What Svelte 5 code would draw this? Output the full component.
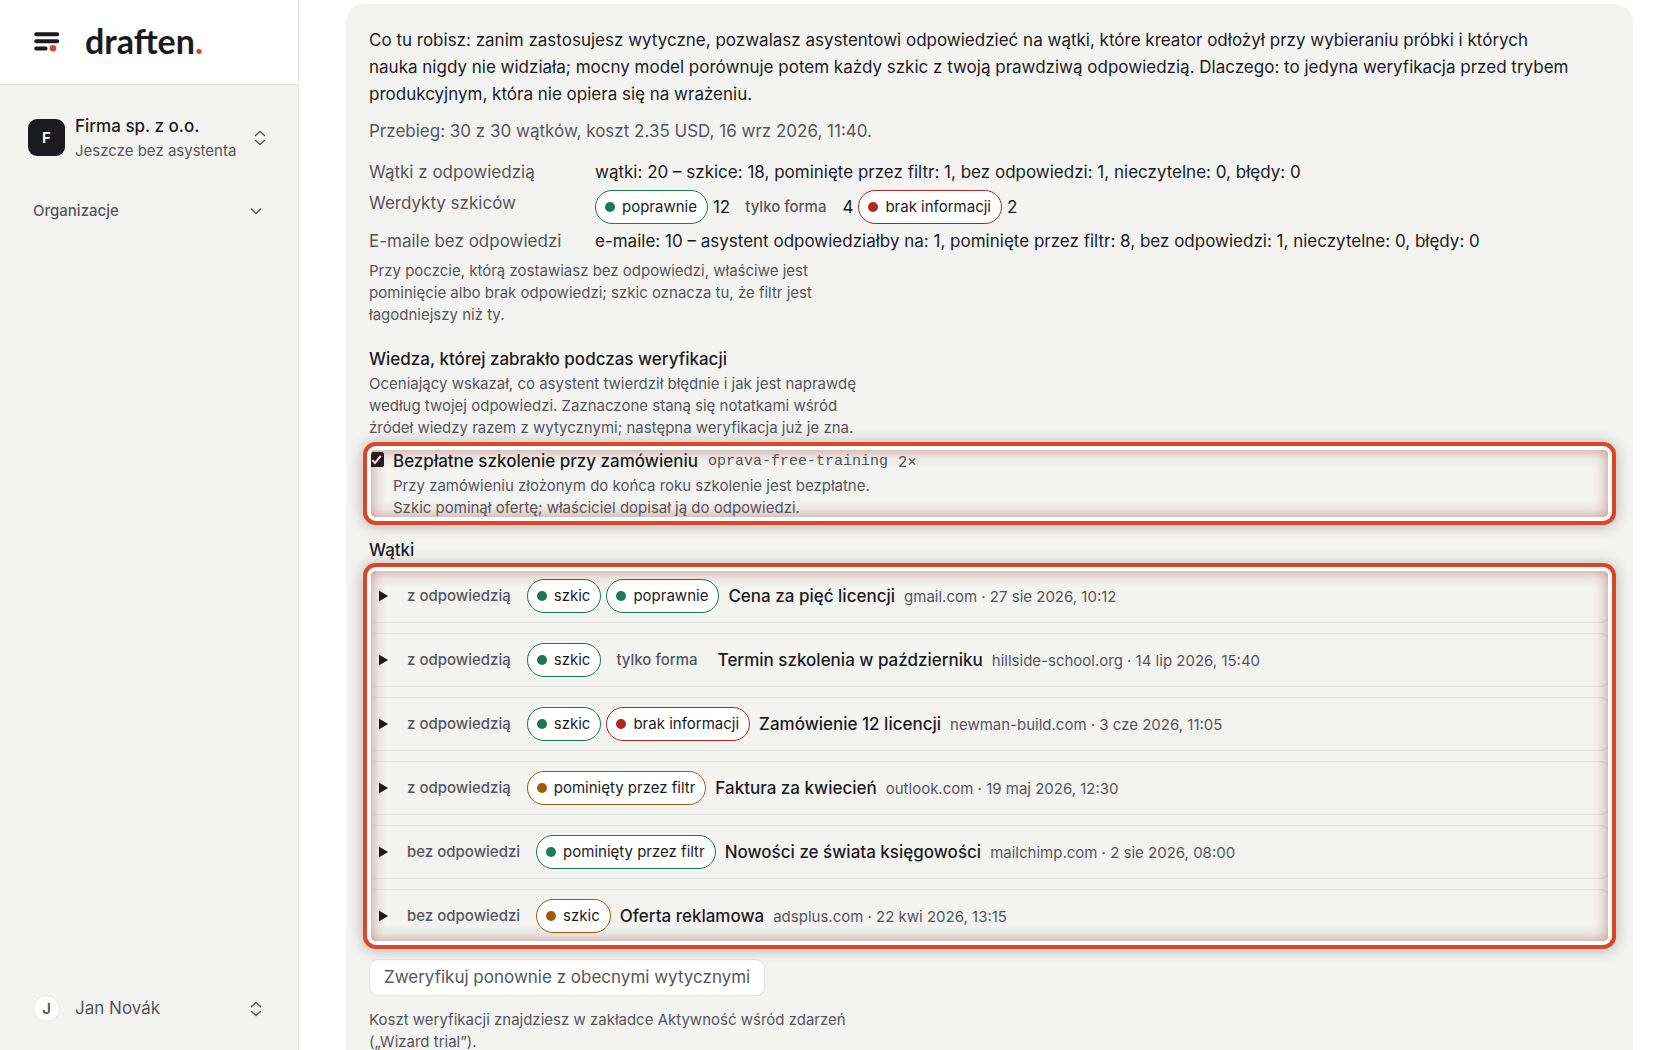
<script>
    const results = [
        { count: 12, text: "poprawnie", tone: "ok" },
        { count: 4, text: "tylko forma", tone: "plain" },
        { count: 2, text: "brak informacji", tone: "bad" }
    ];

    const threads = [
        {
            kind: "z odpowiedzią",
            badges: [{ text: "szkic", tone: "ok" }, { text: "poprawnie", tone: "ok" }],
            title: "Cena za pięć licencji",
            meta: "gmail.com · 27 sie 2026, 10:12"
        },
        {
            kind: "z odpowiedzią",
            badges: [{ text: "szkic", tone: "ok" }, { text: "tylko forma", tone: "plain" }],
            title: "Termin szkolenia w październiku",
            meta: "hillside-school.org · 14 lip 2026, 15:40"
        },
        {
            kind: "z odpowiedzią",
            badges: [{ text: "szkic", tone: "ok" }, { text: "brak informacji", tone: "bad" }],
            title: "Zamówienie 12 licencji",
            meta: "newman-build.com · 3 cze 2026, 11:05"
        },
        {
            kind: "z odpowiedzią",
            badges: [{ text: "pominięty przez filtr", tone: "warn" }],
            title: "Faktura za kwiecień",
            meta: "outlook.com · 19 maj 2026, 12:30"
        },
        {
            kind: "bez odpowiedzi",
            badges: [{ text: "pominięty przez filtr", tone: "ok" }],
            title: "Nowości ze świata księgowości",
            meta: "mailchimp.com · 2 sie 2026, 08:00"
        },
        {
            kind: "bez odpowiedzi",
            badges: [{ text: "szkic", tone: "warn" }],
            title: "Oferta reklamowa",
            meta: "adsplus.com · 22 kwi 2026, 13:15"
        }
    ];

    let useNote = $state(true);
</script>

{#snippet badge(text, tone)}
    <span class="badge {tone}">
        {#if tone !== "plain"}<i class="dot"></i>{/if}{text}
    </span>
{/snippet}

{#snippet upDown()}
    <svg class="icon" width="18" height="18" viewBox="0 0 18 18" aria-hidden="true">
        <path d="M4.5 6.5 9 2.5l4.5 4M4.5 11.5l4.5 4 4.5-4" />
    </svg>
{/snippet}

<div class="app">
    <aside>
        <a class="brand" href="/" aria-label="draften.">
            <svg width="26" height="20" viewBox="0 0 26 20" aria-hidden="true">
                <g stroke="#1b1b1f" stroke-width="4" stroke-linecap="round">
                    <path d="M2.2 2.2h21M2.2 9.2h21M2.2 16.4h9.4" />
                </g>
                <circle cx="19" cy="16.2" r="3.3" fill="#d9472b" />
            </svg>
            <span class="wordmark">draften<span class="stop">.</span></span>
        </a>
        <nav>
            <button class="org">
                <span class="logo">F</span>
                <span class="names">
                    <span class="name">Firma sp. z o.o.</span>
                    <span class="sub">Jeszcze bez asystenta</span>
                </span>
                {@render upDown()}
            </button>
            <button class="group">
                <span>Organizacje</span>
                <svg class="icon" width="18" height="18" viewBox="0 0 18 18" aria-hidden="true">
                    <path d="m4.5 7 4.5 4.5L13.5 7" />
                </svg>
            </button>
        </nav>
        <button class="user">
            <span class="initial">J</span>
            <span class="userName">Jan Novák</span>
            {@render upDown()}
        </button>
    </aside>

    <main>
        <section class="card">
            <p class="intro">Co tu robisz: zanim zastosujesz wytyczne, pozwalasz asystentowi odpowiedzieć na wątki, które kreator odłożył przy wybieraniu próbki i których nauka nigdy nie widziała; mocny model porównuje potem każdy szkic z twoją prawdziwą odpowiedzią. Dlaczego: to jedyna weryfikacja przed trybem produkcyjnym, która nie opiera się na wrażeniu.</p>
            <p class="run">Przebieg: 30 z 30 wątków, koszt 2.35 USD, 16 wrz 2026, 11:40.</p>

            <dl>
                <dt>Wątki z odpowiedzią</dt>
                <dd>wątki: 20 – szkice: 18, pominięte przez filtr: 1, bez odpowiedzi: 1, nieczytelne: 0, błędy: 0</dd>
                <dt>Werdykty szkiców</dt>
                <dd class="verdicts">
                    {#each results as r}
                        {@render badge(r.text, r.tone)}
                        <span>{r.count}</span>
                    {/each}
                </dd>
                <dt>E-maile bez odpowiedzi</dt>
                <dd>e-maile: 10 – asystent odpowiedziałby na: 1, pominięte przez filtr: 8, bez odpowiedzi: 1, nieczytelne: 0, błędy: 0</dd>
            </dl>
            <p class="hint">Przy poczcie, którą zostawiasz bez odpowiedzi, właściwe jest pominięcie albo brak odpowiedzi; szkic oznacza tu, że filtr jest łagodniejszy niż ty.</p>

            <h2>Wiedza, której zabrakło podczas weryfikacji</h2>
            <p class="hint">Oceniający wskazał, co asystent twierdził błędnie i jak jest naprawdę według twojej odpowiedzi. Zaznaczone staną się notatkami wśród źródeł wiedzy razem z wytycznymi; następna weryfikacja już je zna.</p>

            <div class="note marked">
                <input id="note" type="checkbox" bind:checked={useNote} />
                <div>
                    <div class="noteHead">
                        <label for="note">Bezpłatne szkolenie przy zamówieniu</label>
                        <code>oprava-free-training</code>
                        <span>2×</span>
                    </div>
                    <p>Przy zamówieniu złożonym do końca roku szkolenie jest bezpłatne.</p>
                    <p>Szkic pominął ofertę; właściciel dopisał ją do odpowiedzi.</p>
                </div>
            </div>

            <h2>Wątki</h2>
            <div class="threads marked">
                {#each threads as t}
                    <details>
                        <summary>
                            <svg class="marker" width="9" height="12" viewBox="0 0 9 12" aria-hidden="true">
                                <path d="M0 .5v11L9 6z" />
                            </svg>
                            <span class="badges">
                                {@render badge(t.kind, "plain")}
                                {#each t.badges as b}
                                    {@render badge(b.text, b.tone)}
                                {/each}
                            </span>
                            <span class="title">{t.title}</span>
                            <span class="meta">{t.meta}</span>
                        </summary>
                    </details>
                {/each}
            </div>

            <button class="again">Zweryfikuj ponownie z obecnymi wytycznymi</button>
            <p class="hint">Koszt weryfikacji znajdziesz w zakładce Aktywność wśród zdarzeń („Wizard trial”).</p>
        </section>
    </main>
</div>

<style>
    :global(body) {
        background: #fff;
    }
    .app {
        display: flex;
        height: 100vh;
        overflow: hidden;
        font-family: Inter, "Liberation Sans", sans-serif;
        font-size: 17px;
        line-height: 27px;
        color: #1b1b1f;
    }
    .app * {
        box-sizing: border-box;
    }
    p, h2, dl, dd {
        margin: 0;
    }
    button {
        font: inherit;
        color: inherit;
        border: 0;
        padding: 0;
        background: none;
        text-align: left;
    }
    .icon {
        flex: none;
        fill: none;
        stroke: #55565c;
        stroke-width: 1.5;
        stroke-linecap: round;
        stroke-linejoin: round;
    }

    aside {
        display: flex;
        flex-direction: column;
        flex: 0 0 299px;
        background: #f3f3f1;
        border-right: 1px solid #e6e6e3;
    }
    .brand {
        display: flex;
        align-items: center;
        gap: 25px;
        height: 85px;
        padding: 0 34px;
        background: #fff;
        border-bottom: 1px solid #e2e2df;
        color: #1b1b1f;
        text-decoration: none;
    }
    .wordmark {
        padding-bottom: 2px;
        font-family: Lato, sans-serif;
        font-size: 34px;
        font-weight: 700;
        line-height: 40px;
    }
    .stop {
        color: #d9472b;
    }
    nav {
        display: flex;
        flex-direction: column;
        flex: 1;
        gap: 38px;
        padding: 28px;
    }
    .org {
        display: flex;
        align-items: center;
        gap: 10px;
        padding-right: 1px;
    }
    .logo {
        width: 37px;
        height: 37px;
        border-radius: 9px;
        background: #1b1b1f;
        color: #fff;
        font-size: 15px;
        font-weight: 600;
        line-height: 37px;
        text-align: center;
    }
    .names {
        display: flex;
        flex-direction: column;
        flex: 1;
    }
    .name {
        font-weight: 500;
        line-height: 27px;
    }
    .sub {
        font-size: 15px;
        line-height: 22px;
        color: #55565c;
    }
    .group {
        display: flex;
        justify-content: space-between;
        align-items: center;
        padding: 0 5px;
        font-size: 15px;
        font-weight: 500;
        line-height: 22px;
        color: #55565c;
    }
    .user {
        display: flex;
        align-items: center;
        gap: 15px;
        padding: 28px 33px;
        color: #55565c;
    }
    .initial {
        width: 27px;
        height: 27px;
        border: 1px solid #e6e6e3;
        border-radius: 50%;
        background: #fff;
        font-size: 15px;
        font-weight: 600;
        line-height: 25px;
        text-align: center;
    }
    .userName {
        flex: 1;
    }

    main {
        flex: 1;
        min-width: 0;
        padding: 4px 47px;
        overflow-y: auto;
        scrollbar-width: none;
    }
    .card {
        padding: 23px;
        border-radius: 18px;
        background: #f3f3f1;
    }
    .intro {
        max-width: 1208px;
    }
    .run {
        margin-top: 10px;
        color: #55565c;
    }
    dl {
        display: grid;
        grid-template-columns: 222px 1fr;
        gap: 4px;
        margin: 14px 0 5px;
    }
    dt {
        color: #55565c;
    }
    .verdicts {
        display: flex;
        align-items: center;
        gap: 5px;
    }
    .hint {
        max-width: 500px;
        font-size: 15px;
        line-height: 22px;
        color: #55565c;
    }
    h2 {
        margin-top: 20px;
        font-size: 17px;
        font-weight: 500;
    }

    .badge {
        display: inline-flex;
        align-items: center;
        gap: 7px;
        height: 34px;
        padding: 0 10px 0 9px;
        border: 1px solid transparent;
        border-radius: 17px;
        background: #fff;
        font-size: 15px;
        line-height: 22px;
        white-space: nowrap;
    }
    .badge.plain {
        background: none;
        color: #55565c;
        font-weight: 500;
    }
    .dot {
        width: 10px;
        height: 10px;
        border-radius: 50%;
    }
    .ok {
        border-color: #1a7a56;
    }
    .ok .dot {
        background: #1a7a56;
    }
    .bad {
        border-color: #b3261e;
    }
    .bad .dot {
        background: #b3261e;
    }
    .warn {
        border-color: #a15c07;
    }
    .warn .dot {
        background: #a15c07;
    }

    /* highlight ring, drawn over the rows */
    .marked {
        position: relative;
    }
    .marked::after {
        content: "";
        position: absolute;
        inset: 2px;
        border-radius: 5px;
        box-shadow:
            0 0 0 4px #fff,
            0 0 0 8px #d9472b,
            0 1px 14px 8px rgba(40, 20, 10, .3),
            inset 0 0 14px 1px rgba(130, 30, 20, .42);
        pointer-events: none;
    }
    .note {
        display: flex;
        align-items: flex-start;
        gap: 9px;
        margin-top: 9px;
    }
    .note input {
        appearance: none;
        flex: none;
        width: 15px;
        height: 15px;
        margin: 4px 0 0;
        border: 1px solid #1b1b1f;
        border-radius: 2px;
        background: #fff;
    }
    .note input:checked {
        background: #1b1b1f url("data:image/svg+xml,%3Csvg xmlns='http://www.w3.org/2000/svg' viewBox='0 0 13 13'%3E%3Cpath d='M2.2 7l2.8 3L10.8 2.8' fill='none' stroke='white' stroke-width='2'/%3E%3C/svg%3E") center / 13px no-repeat;
    }
    .noteHead {
        display: flex;
        align-items: center;
        gap: 10px;
        color: #55565c;
        font-size: 15px;
    }
    .noteHead label {
        font-size: 17px;
        font-weight: 500;
        color: #1b1b1f;
    }
    .noteHead code {
        font-family: "Liberation Mono", monospace;
        font-size: 15px;
    }
    .note p {
        font-size: 15px;
        line-height: 22px;
        color: #55565c;
    }
    .note + h2 {
        margin-top: 18px;
    }

    .threads {
        display: flex;
        flex-direction: column;
        gap: 10px;
        margin-top: 5px;
    }
    details {
        border: 1px solid #e3e3e0;
        border-radius: 9px;
    }
    summary {
        display: flex;
        align-items: center;
        gap: 9px;
        padding: 9px;
        list-style: none;
    }
    .marker {
        flex: none;
        fill: #1b1b1f;
    }
    .badges {
        display: flex;
        gap: 5px;
    }
    .title {
        font-weight: 500;
    }
    .meta {
        font-size: 15px;
        color: #55565c;
    }
    .again {
        margin: 16px 0 13px;
        padding: 4px 14px;
        border: 1px solid #e3e3e0;
        border-radius: 9px;
        background: #fff;
        color: #55565c;
    }
</style>
